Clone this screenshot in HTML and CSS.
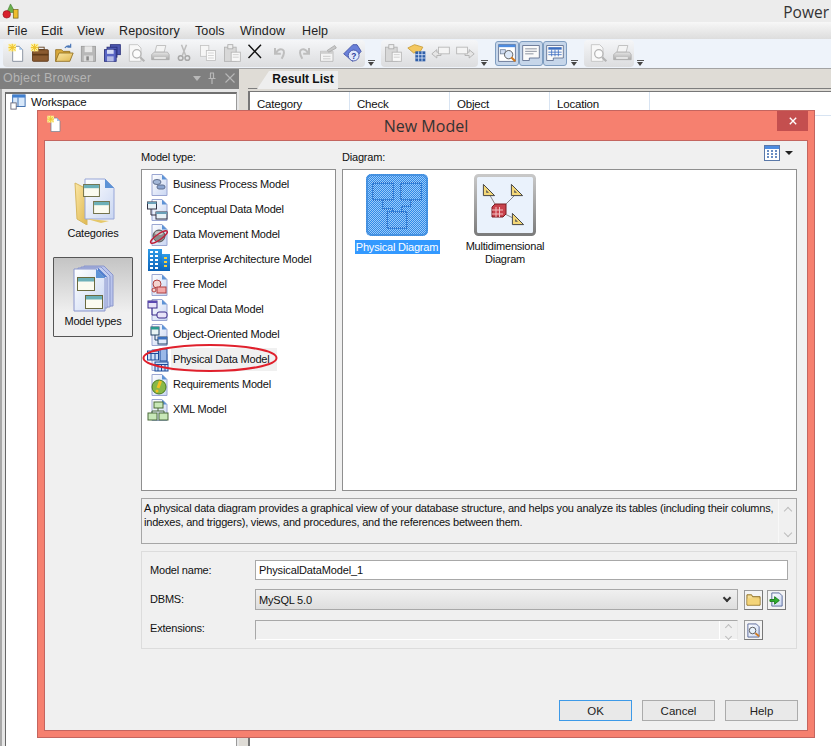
FILE: index.html
```html
<!DOCTYPE html>
<html lang="en">
<head>
<meta charset="utf-8">
<title>PowerDesigner - New Model</title>
<link rel="stylesheet" href="styles.css">
</head>
<body>
<svg class="defs" width="0" height="0" aria-hidden="true">
  <defs>
    <linearGradient id="pg" x1="0" y1="0" x2="1" y2="1"><stop offset="0" stop-color="#fff"/><stop offset="1" stop-color="#c9d6f2"/></linearGradient>
    <linearGradient id="bl" x1="0" y1="0" x2="0" y2="1"><stop offset="0" stop-color="#2e9be8"/><stop offset="1" stop-color="#0c63b8"/></linearGradient>
    <linearGradient id="fd" x1="0" y1="0" x2="1" y2="1"><stop offset="0" stop-color="#fbe7a6"/><stop offset="1" stop-color="#e0b850"/></linearGradient>
    <linearGradient id="gy" x1="0" y1="0" x2="0" y2="1"><stop offset="0" stop-color="#e6e6e6"/><stop offset="1" stop-color="#a8a8a8"/></linearGradient>
    <linearGradient id="fr" x1="0" y1="0" x2="0" y2="1"><stop offset="0" stop-color="#c8c8c8"/><stop offset="1" stop-color="#7c7c7c"/></linearGradient>
    <pattern id="dither" width="2" height="2" patternUnits="userSpaceOnUse"><rect width="2" height="2" fill="#2f8ae8"/><rect width="1" height="1" fill="#9ccaf8"/><rect x="1" y="1" width="1" height="1" fill="#9ccaf8"/></pattern>
    <symbol id="page" viewBox="0 0 24 24"><path d="M5 1.500h10l5 5v16H5z" fill="url(#pg)" stroke="#9aa6d2"/><path d="M15 1.500v5h5z" fill="#5d93d6"/></symbol>
    <symbol id="new" viewBox="0 0 24 24"><path d="M8 4h8l4 4v14H8z" fill="#fff" stroke="#7a8494"/><path d="M16 4v4h4z" fill="#9fc2e8"/><rect x="3" y="1" width="9" height="9" fill="#fdf09a"/><path d="M7.500 1v9M3 5.500h9M4 2l7 7M11 2l-7 7" stroke="#eec22c" stroke-width="1.200"/></symbol>
    <symbol id="case" viewBox="0 0 24 24"><rect x="3" y="8" width="19" height="14" rx="1" fill="#8a5a30" stroke="#5a3514"/><rect x="3" y="13" width="19" height="2" fill="#5d3816"/><rect x="10" y="5" width="7" height="3" fill="none" stroke="#5a3514"/><rect x="1" y="1" width="9" height="9" fill="#fdf09a"/><path d="M5.500 1v9M1 5.500h9M2 2l7 7M9 2l-7 7" stroke="#eec22c" stroke-width="1.200"/></symbol>
    <symbol id="open" viewBox="0 0 24 24"><path d="M2 8h7l2 2h8v3H7l-4 9H2z" fill="#d8a93c" stroke="#8f6c1e"/><path d="M6 12h17l-4 10H2z" fill="url(#fd)" stroke="#8f6c1e"/><path d="M13 6q3-4 7-2M20 1v4h-4" fill="none" stroke="#4c78b8" stroke-width="1.400"/></symbol>
    <symbol id="save" viewBox="0 0 24 24"><rect x="4" y="4" width="17" height="18" fill="#b8b8b8" stroke="#9a9a9a"/><rect x="8" y="4" width="9" height="7" fill="#e8e8e8"/><rect x="7" y="15" width="11" height="7" fill="#dcdcdc"/><rect x="10" y="16" width="3" height="5" fill="#888"/></symbol>
    <symbol id="saveall" viewBox="0 0 24 24"><rect x="10" y="2" width="12" height="12" fill="#4d58b0" stroke="#262c78"/><rect x="6" y="5" width="12" height="12" fill="#4d58b0" stroke="#262c78"/><rect x="3" y="8" width="14" height="14" fill="#5a66c4" stroke="#262c78"/><rect x="6" y="8" width="8" height="5" fill="#d6dcf5"/><rect x="6" y="16" width="8" height="6" fill="#b5bce6"/></symbol>
    <symbol id="preview" viewBox="0 0 24 24"><path d="M4 2h10l4 4v16H4z" fill="#f8f8f8" stroke="#c0c0c0"/><circle cx="13" cy="13" r="5" fill="#fcfcfc" stroke="#b4b4b4" stroke-width="1.500"/><path d="M17 17l5 5" stroke="#b4b4b4" stroke-width="2.500"/></symbol>
    <symbol id="print" viewBox="0 0 24 24"><path d="M8 3h11l-2 8H6z" fill="#f4f4f4" stroke="#b8b8b8"/><path d="M5 11h16l2 3v6H2v-6z" fill="url(#gy)" stroke="#adadad"/><rect x="5" y="17" width="14" height="2" fill="#eee"/></symbol>
    <symbol id="cut" viewBox="0 0 24 24"><path d="M9 2l5 13M15 2l-5 13" stroke="#bdbdbd" stroke-width="1.800"/><circle cx="8" cy="18" r="2.800" fill="none" stroke="#a8a8a8" stroke-width="1.800"/><circle cx="16" cy="18" r="2.800" fill="none" stroke="#a8a8a8" stroke-width="1.800"/></symbol>
    <symbol id="copy" viewBox="0 0 24 24"><rect x="3" y="3" width="10" height="13" fill="#f6f6f6" stroke="#c4c4c4"/><rect x="10" y="9" width="11" height="12" fill="#fafafa" stroke="#c0c0c0"/><path d="M12 12h7M12 15h7M12 18h7" stroke="#cfcfcf"/></symbol>
    <symbol id="paste" viewBox="0 0 24 24"><rect x="3" y="5" width="14" height="17" fill="#d8d8d8" stroke="#b0b0b0"/><rect x="7" y="2" width="6" height="5" fill="#eee" stroke="#aaa"/><rect x="11" y="11" width="11" height="11" fill="#f8f8f8" stroke="#b4b4b4"/><path d="M13 14h7M13 17h7" stroke="#c8c8c8"/></symbol>
    <symbol id="del" viewBox="0 0 24 24"><path d="M3 2l15 16M18 2L3 18" stroke="#111" stroke-width="1.700" fill="none"/></symbol>
    <symbol id="undo" viewBox="0 0 24 24"><path d="M6 6v7h7M7 12q4-6 8-4t-1 11" fill="none" stroke="#bebebe" stroke-width="2.400"/></symbol>
    <symbol id="redo" viewBox="0 0 24 24"><path d="M18 6v7h-7M17 12q-4-6-8-4t1 11" fill="none" stroke="#bebebe" stroke-width="2.400"/></symbol>
    <symbol id="props" viewBox="0 0 24 24"><path d="M3 10h15v12H3z" fill="#f4f4f4" stroke="#b4b4b4"/><path d="M3 10h15v3H3z" fill="#cfcfcf"/><path d="M6 16h9M6 19h9" stroke="#c4c4c4"/><path d="M11 9l9-6 2 3-9 5z" fill="#c8c8c8" stroke="#a8a8a8"/></symbol>
    <symbol id="help" viewBox="0 0 24 24"><path d="M2 13L13 2h5l5 8-10 12z" fill="#6a80d8" stroke="#3e4ea4"/><circle cx="14" cy="15" r="6.500" fill="#dfe8fb" stroke="#3e4ea4"/><text x="14" y="19" font-size="10" font-weight="700" text-anchor="middle" fill="#2a3c9c" font-family="Liberation Sans">?</text></symbol>
    <symbol id="cube" viewBox="0 0 24 24"><path d="M1 6l8-4 10 3-3 5-8 2z" fill="#f4c860" stroke="#c89a30"/><rect x="10" y="10" width="12" height="12" fill="#2f5fa8"/><path d="M10 14h12M10 18h12M14 10v12M18 10v12" stroke="#dce8fa"/></symbol>
    <symbol id="back" viewBox="0 0 24 24"><path d="M1 13l6-5v3h5v4H7v3z" fill="#e6e6e6" stroke="#acacac"/><rect x="9" y="5" width="13" height="8" fill="#f4f4f4" stroke="#b4b4b4"/></symbol>
    <symbol id="fwd" viewBox="0 0 24 24"><path d="M23 13l-6-5v3h-5v4h5v3z" fill="#e6e6e6" stroke="#acacac"/><rect x="2" y="5" width="13" height="8" fill="#f4f4f4" stroke="#b4b4b4"/></symbol>
    <symbol id="tbrowse" viewBox="0 0 24 24"><rect x="2" y="2" width="20" height="20" fill="#fff" stroke="#5a6a8a"/><rect x="2" y="2" width="20" height="3" fill="#4d8ce0"/><rect x="4" y="8" width="6" height="5" fill="#d0dcf0" stroke="#7788a0"/><circle cx="14" cy="14" r="5" fill="#dce8f8" stroke="#444"/><path d="M17 17l5 5" stroke="#d07a20" stroke-width="2.500"/></symbol>
    <symbol id="toutput" viewBox="0 0 24 24"><path d="M2 3h20v15H10v3H2z" fill="#fafafa" stroke="#5a6a8a"/><path d="M5 7h14M5 10h14M5 13h10" stroke="#7a8290"/></symbol>
    <symbol id="tresult" viewBox="0 0 24 24"><path d="M2 3h20v15H10v3H2z" fill="#fafafa" stroke="#5a6a8a"/><rect x="4" y="5" width="16" height="3" fill="#3d6fc0"/><path d="M4 11h16M4 14h16M8 8v8M12 8v8M16 8v8" stroke="#3d6fc0"/></symbol>
    <symbol id="logo" viewBox="0 0 18 18"><path d="M9 1l5 9H5z" fill="#6cb04c" stroke="#3d7a2c" stroke-width=".6"/><rect x="12" y="7" width="5" height="9" fill="#eebd2c" stroke="#7a6a20" stroke-width=".8"/><circle cx="5" cy="12" r="4" fill="#d8202c" stroke="#8a1018" stroke-width=".6"/></symbol>
    <symbol id="ws" viewBox="0 0 18 18"><rect x="3" y="1" width="14" height="13" fill="#d8e8fa" stroke="#3366aa"/><rect x="3" y="1" width="14" height="3" fill="#3f7fd0"/><path d="M9 4v10" stroke="#3366aa"/><rect x="1" y="10" width="6" height="7" fill="#fff" stroke="#667"/></symbol>
    <symbol id="m-bpm" viewBox="0 0 24 24"><use href="#page"/><ellipse cx="10" cy="9" rx="4" ry="2.500" fill="#a4b8d8" stroke="#607090"/><rect x="10" y="12" width="8" height="4" rx="2" fill="#8aa4d0" stroke="#607090"/></symbol>
    <symbol id="m-cdm" viewBox="0 0 24 24"><use href="#page"/><rect x="0.500" y="4" width="9" height="7" fill="#e8f2f8" stroke="#334"/><rect x="0.500" y="4" width="9" height="2" fill="#6aa0b8"/><rect x="9" y="14" width="11" height="7" fill="#e8f2f8" stroke="#334"/><rect x="9" y="14" width="11" height="2" fill="#6aa0b8"/><path d="M4 11v6h5" fill="none" stroke="#334"/></symbol>
    <symbol id="m-dmm" viewBox="0 0 24 24"><use href="#page"/><circle cx="12" cy="13" r="6" fill="#8c8c8c" stroke="#555"/><ellipse cx="12" cy="10" rx="4" ry="2" fill="#c8c8c8"/><ellipse cx="12" cy="14" rx="10" ry="2.800" transform="rotate(-35 12 14)" fill="none" stroke="#c0203a" stroke-width="1.400"/></symbol>
    <symbol id="m-eam" viewBox="0 0 24 24"><rect x="1" y="1" width="14" height="22" fill="url(#bl)"/><rect x="15" y="6" width="8" height="17" fill="url(#bl)"/><path d="M3 4h3M8 4h3M3 8h3M8 8h3M3 12h3M8 12h3M3 16h3M8 16h3M3 20h3M8 20h3" stroke="#fff" stroke-width="2"/><path d="M17 10h3M17 14h3M17 18h3" stroke="#f6d040" stroke-width="2"/></symbol>
    <symbol id="m-free" viewBox="0 0 24 24"><use href="#page"/><circle cx="10" cy="11" r="4" fill="#f4d4d0" stroke="#b04040"/><rect x="10" y="14" width="9" height="6" fill="#f2a8a8" stroke="#b04040"/><circle cx="7" cy="17" r="2" fill="#f4d4d0" stroke="#b04040"/></symbol>
    <symbol id="m-ldm" viewBox="0 0 24 24"><use href="#page"/><rect x="1" y="3" width="9" height="7" fill="#e8e4f8" stroke="#3a2a8a"/><rect x="1" y="3" width="9" height="2" fill="#5a48b0"/><rect x="10" y="14" width="10" height="6" rx="2" fill="#e8e4f8" stroke="#3a2a8a"/><path d="M5 10v7h5" fill="none" stroke="#3a2a8a"/></symbol>
    <symbol id="m-oom" viewBox="0 0 24 24"><use href="#page"/><rect x="4" y="4" width="8" height="8" fill="#e8f4f4" stroke="#246"/><rect x="4" y="4" width="8" height="2.500" fill="#2a9a90"/><rect x="11" y="14" width="9" height="7" fill="#dfe8f8" stroke="#246"/><rect x="11" y="14" width="9" height="2.500" fill="#3a70c0"/><path d="M8 12v5h3" fill="none" stroke="#246"/></symbol>
    <symbol id="m-pdm" viewBox="0 0 24 24"><use href="#page"/><rect x="13" y="1" width="7" height="12" fill="#9ab8e8" stroke="#1a4a9a"/><rect x="0.500" y="3" width="11" height="9" fill="#cfe0f8" stroke="#1a4a9a"/><path d="M0.500 5.500h11M4 6v6M8 6v6" stroke="#1a4a9a"/><rect x="8" y="14" width="13" height="9" fill="#cfe0f8" stroke="#1a4a9a"/><path d="M8 16.500h13M11 17v6M14.500 17v6M18 17v6" stroke="#1a4a9a"/></symbol>
    <symbol id="m-req" viewBox="0 0 24 24"><use href="#page"/><circle cx="12" cy="14" r="7" fill="#88b848" stroke="#4a7a20"/><path d="M13.500 8l-2.500 7" stroke="#f4c020" stroke-width="3"/><circle cx="10" cy="18" r="1.500" fill="#f4c020"/></symbol>
    <symbol id="m-xml" viewBox="0 0 24 24"><use href="#page"/><rect x="7" y="4" width="9" height="6" fill="#c8e8b8" stroke="#4a6a3a"/><rect x="1" y="15" width="9" height="7" fill="#c8e8b8" stroke="#4a6a3a"/><rect x="12" y="15" width="9" height="7" fill="#c8e8b8" stroke="#4a6a3a"/><path d="M11 10v3M5 15v-2h12v2" fill="none" stroke="#4a6a3a"/></symbol>
    <symbol id="win" viewBox="0 0 18 14"><rect x=".5" y=".5" width="17" height="13" fill="#fbfbf0" stroke="#6a6a40"/><rect x="1" y="1" width="16" height="3.500" fill="#6cb0b8"/></symbol>
    <symbol id="tri" viewBox="0 0 20 20"><path d="M2 2l16 16H2z" fill="#f4d878" stroke="#444" stroke-width="1.400"/><path d="M6 10l4 4H6z" fill="#555"/></symbol>
    <symbol id="gridview" viewBox="0 0 16 16"><rect x=".5" y=".5" width="15" height="15" fill="#fff" stroke="#5a78a8"/><rect x="1" y="1" width="14" height="3" fill="#4d8ce0"/><path d="M3 6h2M7 6h2M11 6h2M3 9h2M7 9h2M11 9h2M3 12h2M7 12h2M11 12h2" stroke="#3a6ab0" stroke-width="1.400"/></symbol>
    <symbol id="folder" viewBox="0 0 16 16"><path d="M1 3h5l1 2h8v9H1z" fill="url(#fd)" stroke="#8a6a1c"/><rect x="1.500" y="7" width="13" height="6.500" fill="#f4d478"/></symbol>
    <symbol id="import" viewBox="0 0 16 16"><path d="M3 1h8l3 3v11H3z" fill="url(#pg)" stroke="#5a6a9a"/><path d="M1 8h5V5l5 4-5 4v-3H1z" fill="#30b030" stroke="#1a7a1a"/></symbol>
    <symbol id="lens" viewBox="0 0 16 16"><path d="M2 1h9l3 3v11H2z" fill="url(#pg)" stroke="#5a6a9a"/><circle cx="7" cy="8" r="3.500" fill="#e8f2fc" stroke="#555"/><path d="M10 11l4 3" stroke="#d07a20" stroke-width="2"/></symbol>
    <symbol id="pin" viewBox="0 0 10 12"><path d="M3 1h4M3.500 1v5M6.500 1v5M1.500 6.500h7M5 6.500V12" fill="none" stroke="#b8b8b8" stroke-width="1.200"/></symbol>
    <symbol id="panex" viewBox="0 0 10 10"><path d="M.5 .5l9 9M9.500 .5l-9 9" stroke="#b8b8b8" stroke-width="1.100"/></symbol>
  </defs>
</svg>

<div class="app">
  <header class="titlebar">
    <svg class="logo"><use href="#logo"/></svg>
    <span class="app-title">Power</span>
  </header>
  <nav class="menubar">
    <span class="menu m-file">File</span><span class="menu m-edit">Edit</span><span class="menu m-view">View</span><span class="menu m-repo">Repository</span><span class="menu m-tools">Tools</span><span class="menu m-window">Window</span><span class="menu m-help">Help</span>
  </nav>
  <div class="toolbar">
    <div class="tb-group g1">
      <svg class="tb"><use href="#new"/></svg><svg class="tb"><use href="#case"/></svg><svg class="tb"><use href="#open"/></svg><svg class="tb"><use href="#save"/></svg><svg class="tb"><use href="#saveall"/></svg><svg class="tb"><use href="#preview"/></svg><svg class="tb"><use href="#print"/></svg><svg class="tb"><use href="#cut"/></svg><svg class="tb"><use href="#copy"/></svg><svg class="tb"><use href="#paste"/></svg><svg class="tb"><use href="#del"/></svg><svg class="tb"><use href="#undo"/></svg><svg class="tb"><use href="#redo"/></svg><svg class="tb"><use href="#props"/></svg><svg class="tb"><use href="#help"/></svg>
    </div>
    <span class="chev"></span>
    <div class="tb-group g2">
      <svg class="tb"><use href="#paste"/></svg><svg class="tb"><use href="#cube"/></svg><svg class="tb"><use href="#back"/></svg><svg class="tb"><use href="#fwd"/></svg>
    </div>
    <span class="chev"></span>
    <div class="tb-group g3">
      <span class="toggle"><svg class="tb"><use href="#tbrowse"/></svg></span><span class="toggle"><svg class="tb"><use href="#toutput"/></svg></span><span class="toggle"><svg class="tb"><use href="#tresult"/></svg></span>
    </div>
    <span class="chev"></span>
    <div class="tb-group g4">
      <svg class="tb"><use href="#preview"/></svg><svg class="tb"><use href="#print"/></svg>
    </div>
    <span class="chev"></span>
  </div>
  <main class="work">
    <aside class="browser">
      <div class="pane-head">
        <span class="pane-title">Object Browser</span>
        <span class="pane-btns"><span class="pane-arrow"></span><svg class="pane-pin"><use href="#pin"/></svg><svg class="pane-x"><use href="#panex"/></svg></span>
      </div>
      <div class="tree">
        <div class="tree-row"><svg class="tree-icon"><use href="#ws"/></svg>Workspace</div>
      </div>
    </aside>
    <section class="results">
      <div class="tabstrip"><span class="tab">Result List</span></div>
      <div class="result-body">
        <div class="cols"><span class="col">Category</span><span class="col">Check</span><span class="col">Object</span><span class="col">Location</span></div>
      </div>
    </section>
  </main>
</div>

<div class="dialog">
  <div class="dlg-title">
    <svg class="dlg-icon"><use href="#new"/></svg>
    <span class="dlg-text">New Model</span>
    <span class="dlg-close"><svg class="close-x" viewBox="0 0 10 10"><path d="M1 1l8 8M9 1l-8 8" stroke="#fff" stroke-width="1.700"/></svg></span>
  </div>
  <div class="client">
    <div class="side">
      <div class="side-btn">
        <svg class="side-icon" viewBox="0 0 48 48">
          <path d="M6 6l12 6v36L8 42z" fill="url(#fd)" stroke="#d8b860"/>
          <path d="M16 2h20l9 9v31H16z" fill="url(#pg)" stroke="#97a6d8"/><path d="M36 2v9h9z" fill="#5d93d6"/>
          <use href="#win" x="14" y="7" width="17" height="13"/><use href="#win" x="24" y="24" width="17" height="13"/>
          <path d="M18 42l14 4 8-2-20-2z" fill="#e6c868"/>
        </svg>
        <span>Categories</span>
      </div>
      <div class="side-btn active">
        <svg class="side-icon" viewBox="0 0 48 48">
          <path d="M15 1h20l9 9v31H15z" fill="#b9c4ec" stroke="#8a96cc"/>
          <path d="M12 2h20l9 9v31H12z" fill="#c5cff0" stroke="#8a96cc"/>
          <path d="M9 3h20l9 9v31H9z" fill="#d2daf5" stroke="#8a96cc"/><path d="M29 3v9h9z" fill="#4e7fd0"/>
          <path d="M5 4h22l9 9v33H5z" fill="url(#pg)" stroke="#8a96cc"/><path d="M27 4v9h9z" fill="#5d93d6"/>
          <use href="#win" x="8" y="12" width="18" height="14"/><use href="#win" x="16" y="30" width="18" height="14"/>
        </svg>
        <span>Model types</span>
      </div>
    </div>
    <div class="main">
      <div class="panes">
        <div class="types">
          <div class="label">Model type:</div>
          <ul class="list">
            <li class="item"><svg class="item-icon"><use href="#m-bpm"/></svg><span class="item-text">Business Process Model</span></li>
            <li class="item"><svg class="item-icon"><use href="#m-cdm"/></svg><span class="item-text">Conceptual Data Model</span></li>
            <li class="item"><svg class="item-icon"><use href="#m-dmm"/></svg><span class="item-text">Data Movement Model</span></li>
            <li class="item"><svg class="item-icon"><use href="#m-eam"/></svg><span class="item-text">Enterprise Architecture Model</span></li>
            <li class="item"><svg class="item-icon"><use href="#m-free"/></svg><span class="item-text">Free Model</span></li>
            <li class="item"><svg class="item-icon"><use href="#m-ldm"/></svg><span class="item-text">Logical Data Model</span></li>
            <li class="item"><svg class="item-icon"><use href="#m-oom"/></svg><span class="item-text">Object-Oriented Model</span></li>
            <li class="item selected"><svg class="item-icon"><use href="#m-pdm"/></svg><span class="item-text">Physical Data Model</span>
              <svg class="ring" viewBox="0 0 136 30"><ellipse cx="68" cy="15" rx="66.500" ry="13" fill="none" stroke="#e0202c" stroke-width="2"/></svg>
            </li>
            <li class="item"><svg class="item-icon"><use href="#m-req"/></svg><span class="item-text">Requirements Model</span></li>
            <li class="item"><svg class="item-icon"><use href="#m-xml"/></svg><span class="item-text">XML Model</span></li>
          </ul>
        </div>
        <div class="diagrams">
          <div class="diag-head"><span class="label">Diagram:</span>
            <span class="view-btn"><svg class="view-icon"><use href="#gridview"/></svg><span class="view-caret"></span></span>
          </div>
          <div class="diag-list">
            <div class="diag">
              <svg class="diag-icon" viewBox="0 0 62 62">
                <rect width="62" height="62" rx="5" fill="url(#dither)"/>
                <rect x="1" y="1" width="60" height="60" rx="5" fill="none" stroke="#3f8bdc" stroke-width="2" opacity=".8"/>
                <g fill="none" stroke="#1f64c0" stroke-dasharray="1 1" stroke-width="1.500"><rect x="7" y="9" width="20" height="17"/><rect x="35" y="9" width="20" height="17"/><rect x="21" y="38" width="20" height="16"/><path d="M17 26v9h10v3M45 26v6H36v6"/></g>
              </svg>
              <span class="diag-name picked">Physical Diagram</span>
            </div>
            <div class="diag">
              <svg class="diag-icon" viewBox="0 0 62 62">
                <rect x="1.500" y="1.500" width="59" height="59" rx="3" fill="#eaf2fc" stroke="url(#fr)" stroke-width="3"/>
                <path d="M14 18l11 19M44 18L25 37M25 37l20 10" stroke="#8a8a8a"/>
                <use href="#tri" x="8" y="9" width="14" height="14"/><use href="#tri" x="36" y="9" width="14" height="14"/><use href="#tri" x="37" y="38" width="14" height="14"/>
                <path d="M18 33l3-3h11v10l-3 3H18z" fill="#c8424c" stroke="#7a1a20"/><path d="M18 36h11M18 40h11M22 33v10M25.500 33v10" stroke="#f2c0c0"/>
              </svg>
              <span class="diag-name">Multidimensional Diagram</span>
            </div>
          </div>
        </div>
      </div>
      <div class="desc">
        <p class="desc-text">A physical data diagram provides a graphical view of your database structure, and helps you analyze its tables (including their columns, indexes, and triggers), views, and procedures, and the references between them.</p>
        <div class="desc-bar"><span class="sb-up"></span><span class="sb-down"></span></div>
      </div>
      <div class="form">
        <div class="row row-name"><label class="form-label">Model name:</label><input class="field name-field" type="text" value="PhysicalDataModel_1"></div>
        <div class="row row-dbms"><label class="form-label">DBMS:</label>
          <div class="combo"><span>MySQL 5.0</span><span class="combo-arrow"></span></div>
          <span class="mini"><svg class="mini-icon"><use href="#folder"/></svg></span><span class="mini"><svg class="mini-icon"><use href="#import"/></svg></span>
        </div>
        <div class="row row-ext"><label class="form-label">Extensions:</label>
          <div class="ext"><span class="spin"><span class="sb-up"></span><span class="sb-down"></span></span></div>
          <span class="mini"><svg class="mini-icon"><use href="#lens"/></svg></span>
        </div>
      </div>
      <div class="actions"><button class="btn default">OK</button><button class="btn">Cancel</button><button class="btn">Help</button></div>
    </div>
  </div>
</div>
</body>
</html>
```
FILE: styles.css
```css
* { box-sizing: border-box; }
html, body { margin: 0; padding: 0; }
body { width: 831px; height: 746px; overflow: hidden; position: relative; background: #fff; font: 11px "Liberation Sans", Arial, sans-serif; letter-spacing: -.2px; color: #111; }
.defs { position: absolute; }
.app { height: 746px; display: flex; flex-direction: column; }

.titlebar { height: 22px; background: #ececec; display: flex; align-items: center; justify-content: space-between; padding: 1px 2px 0 2px; }
.logo { width: 17px; height: 17px; }
.app-title { font: 15.500px "Open Sans", sans-serif; letter-spacing: 0; color: #333; }

.menubar { height: 17px; background: linear-gradient(#f7f7f7, #dddddd); display: flex; align-items: center; font: 12.500px "Liberation Sans", sans-serif; color: #222; letter-spacing: .1px; padding-left: 7px; }
.m-file { width: 34px; } .m-edit { width: 36px; } .m-view { width: 42px; } .m-repo { width: 76px; } .m-tools { width: 45px; } .m-window { width: 62px; }

.toolbar { height: 30px; background: #eef3fa; border-bottom: 1px solid #a3a3a3; display: flex; align-items: center; padding: 0 0 1px 3px; }
.tb-group { height: 27px; border-radius: 4px; display: flex; align-items: center; background: linear-gradient(#f5f6f8, #dcdddf); }
.g1 { width: 362px; padding-left: 1px; }
.g2 { width: 97px; padding-left: 0; }
.g3 { width: 74px; padding-left: 1px; background: none; }
.g4 { width: 50px; padding-left: 2px; }
.tb { width: 24px; height: 24px; display: block; padding: 2px; flex: none; }
.toggle { width: 24px; height: 25px; flex: none; background: #c6d6ea; border: 1px solid #7f9dc0; border-radius: 3px; display: block; }
.toggle .tb { margin: -1px 0 0 -1px; }
.chev { width: 16px; height: 27px; flex: none; position: relative; }
.chev::after { content: ""; position: absolute; left: 3px; bottom: 6px; width: 7px; height: 1px; background: #555; }
.chev::before { content: ""; position: absolute; left: 3px; bottom: 1px; border: 3.500px solid transparent; border-top: 4px solid #444; border-bottom: 0; }

.work { flex: 1; display: flex; min-height: 0; }
.browser { width: 239px; flex: none; display: flex; flex-direction: column; background: #e6e6e6; border-left: 2px solid #a8a8a8; }
.pane-head { height: 20px; background: #7f7f7f; display: flex; align-items: center; justify-content: space-between; padding: 0 4px 2px 0; margin: 0 0 0 -2px; flex: none; }
.pane-title { font: 12.500px "Liberation Sans", sans-serif; color: #b4b4b4; letter-spacing: .2px; padding-left: 3px; }
.pane-btns { display: flex; align-items: center; gap: 8px; }
.pane-arrow { width: 0; height: 0; border: 4px solid transparent; border-top: 5px solid #b8b8b8; border-bottom: 0; margin-right: -2px; }
.pane-pin { width: 10px; height: 12px; }
.pane-x { width: 10px; height: 10px; }
.tree { flex: 1; margin: 3px 2px 0 3px; background: #fff; border-right: 1px solid #9a9a9a; border-left: 1px solid #666; border-top: 2px solid #707070; padding: 0 0 0 4px; }
.tree-row { display: flex; align-items: center; gap: 5px; height: 15px; font-size: 11.500px; }
.tree-icon { width: 16px; height: 16px; flex: none; }

.results { flex: 1; display: flex; flex-direction: column; background: #dfdcd6; padding: 0 0 0 9px; }
.tabstrip { height: 20px; flex: none; padding: 2px 0 0 9px; border-bottom: 1px solid #7e7e7e; }
.tab { display: block; width: 81px; height: 18px; background: #eeeeee; font: 700 12px "Liberation Sans", sans-serif; letter-spacing: 0; text-align: center; line-height: 17px; padding-left: 11px; clip-path: polygon(0 100%, 12px 0, 100% 0, 100% 100%); }
.result-body { flex: 1; margin-top: 2px; background: #fff; border-top: 1px solid #777; border-left: 2px solid #777; }
.cols { display: flex; height: 24px; border-bottom: 1px solid #d8e4f2; }
.col { width: 100px; border-right: 1px solid #d8e4f2; padding: 6px 0 0 7px; font-size: 11.500px; }

.dialog { position: absolute; left: 37px; top: 110px; width: 778px; height: 628px; background: #f6806f; border: 1px solid #c4655f; display: flex; flex-direction: column; }
.dlg-title { height: 29px; flex: none; display: flex; align-items: center; justify-content: center; position: relative; }
.dlg-icon { position: absolute; left: 7px; top: 4px; width: 18px; height: 18px; }
.dlg-text { font: 16px "Open Sans", sans-serif; letter-spacing: 0; color: #333; }
.dlg-close { position: absolute; right: 6px; top: 0; width: 31px; height: 20px; background: #c44f4f; display: flex; align-items: center; justify-content: center; }
.close-x { width: 8px; height: 8px; }
.client { flex: 1; margin: 0 6px 6px 6px; background: #f0f0f0; border: 1px solid #c4655f; display: flex; min-height: 0; }

.side { width: 96px; flex: none; padding: 28px 0 0 8px; display: flex; flex-direction: column; gap: 10px; }
.side-btn { width: 80px; height: 78px; display: flex; flex-direction: column; align-items: center; justify-content: flex-end; padding-bottom: 8px; gap: 2px; }
.side-btn.active { height: 80px; background: linear-gradient(#c4c4c4, #f0f0f0 70%); border: 1px solid #555; border-radius: 1px; padding-bottom: 9px; }
.side-icon { width: 48px; height: 48px; }

.main { width: 656px; display: flex; flex-direction: column; }
.panes { display: flex; gap: 6px; }
.types { width: 195px; }
.diagrams { width: 455px; }
.label { height: 28px; padding-top: 10px; }
.diag-head { display: flex; justify-content: space-between; height: 28px; }
.view-btn { display: flex; align-items: center; gap: 5px; padding: 2px 4px 6px 0; }
.view-icon { width: 16px; height: 16px; }
.view-caret { width: 0; height: 0; border: 4px solid transparent; border-top: 4px solid #222; border-bottom: 0; }
.list { list-style: none; margin: 0; padding: 2px 0 0 0; height: 322px; background: #fff; border: 1px solid #8f8f8f; }
.item { height: 25px; display: flex; align-items: center; padding-left: 5px; position: relative; }
.item-icon { width: 24px; height: 24px; flex: none; }
.item-text { padding: 5px 3px 6px 2px; white-space: nowrap; }
.selected .item-text { background: #f0f0f0; width: 106px; }
.ring { position: absolute; left: 0; top: -4px; width: 136px; height: 30px; }
.diag-list { height: 322px; background: #fff; border: 1px solid #8f8f8f; display: flex; padding: 4px 0 0 10px; gap: 20px; }
.diag { width: 88px; display: flex; flex-direction: column; align-items: center; text-align: center; }
.diag-icon { width: 62px; height: 62px; flex: none; }
.diag-name { margin-top: 4px; line-height: 13px; padding: 0 2px; width: 84px; }
.diag-name.picked { background: #3399ff; color: #fff; width: 85px; white-space: nowrap; padding: 0; height: 14px; line-height: 15px; }

.desc { margin-top: 7px; height: 46px; border: 1px solid #a6a6a6; display: flex; justify-content: space-between; }
.desc-text { margin: 2px 0 0 2px; font-size: 11px; letter-spacing: -.21px; line-height: 14px; width: 636px; }
.desc-bar { width: 18px; border-left: 1px solid #f8f8f8; display: flex; flex-direction: column; justify-content: space-between; align-items: center; padding: 9px 0 7px; }
.sb-up, .sb-down { width: 6px; height: 6px; border-left: 1.500px solid #bdbdbd; border-top: 1.500px solid #bdbdbd; transform: rotate(45deg); }
.sb-down { transform: rotate(225deg); }

.form { margin-top: 7px; height: 98px; border: 1px solid #dcdcdc; padding: 8px 0 0 8px; display: flex; flex-direction: column; }
.row { display: flex; align-items: center; }
.form-label { width: 105px; flex: none; }
.row-dbms { margin-top: 9px; }
.row-dbms .form-label { margin-top: -2px; }
.row-ext { margin-top: 10px; }
.row-ext .form-label { margin-top: -4px; }
.field { width: 533px; height: 20px; border: 1px solid #a8a8a8; background: #fff; font: 11px "Liberation Sans", sans-serif; letter-spacing: -.12px; padding: 0 3px; color: #111; outline: 0; }
.combo { width: 483px; height: 21px; border: 1px solid #a8a8a8; background: linear-gradient(#f0f0f0, #dedede); display: flex; align-items: center; justify-content: space-between; padding: 0 6px 0 3px; margin-right: 6px; }
.combo-arrow { width: 6px; height: 6px; border-right: 2px solid #333; border-bottom: 2px solid #333; transform: rotate(45deg); margin: -3px 1px 0 0; }
.ext { width: 483px; height: 20px; border: 1px solid #a8a8a8; border-right-color: #e8e8e8; border-bottom-color: #fff; display: flex; justify-content: flex-end; margin-right: 6px; }
.spin { width: 18px; border-left: 1px solid #fff; display: flex; flex-direction: column; align-items: center; justify-content: center; gap: 4px; padding-top: 3px; }
.spin .sb-up, .spin .sb-down { width: 5px; height: 5px; }
.mini { width: 19px; height: 20px; border: 1px solid #9a9a9a; border-right-color: #777; border-bottom-color: #777; background: #f4f4f4; margin-right: 4px; display: flex; align-items: center; justify-content: center; flex: none; }
.mini-icon { width: 15px; height: 15px; }

.actions { display: flex; justify-content: flex-end; gap: 10px; margin: 51px -1px 0 0; }
.btn { width: 73px; height: 21px; background: #e9e9e9; border: 1px solid #ababab; font: 11.500px "Liberation Sans", sans-serif; color: #222; padding: 0; }
.btn.default { border-color: #3d9ae8; }
```
